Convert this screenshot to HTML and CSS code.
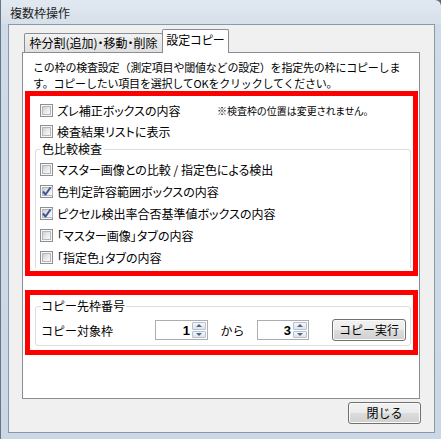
FILE: index.html
```html
<!DOCTYPE html>
<html lang="ja">
<head>
<meta charset="utf-8">
<title>複数枠操作</title>
<link rel="stylesheet" href="styles.css">
</head>
<body>
<div class="window">
  <div class="titlebar">複数枠操作</div>
  <div class="client">
    <div class="tabs">
      <div class="tab">枠分割(追加)・移動・削除</div>
      <div class="tab active">設定コピー</div>
    </div>
    <div class="panel">
      <p class="desc">この枠の検査設定（測定項目や閾値などの設定）を指定先の枠にコピーしま<br>す。コピーしたい項目を選択してOKをクリックしてください。</p>
      <div class="mark items">
        <div class="row first">
          <span class="check wide"><span class="cb"><span class="inner"></span></span>ズレ補正ボックスの内容</span>
          <span class="note">※検査枠の位置は変更されません。</span>
        </div>
        <div class="row second">
          <span class="check"><span class="cb"><span class="inner"></span></span>検査結果リストに表示</span>
        </div>
        <fieldset class="group color">
          <legend>色比較検査</legend>
          <div class="row grow"><span class="check"><span class="cb"><span class="inner"></span></span>マスター画像との比較 / 指定色による検出</span></div>
          <div class="row grow"><span class="check"><span class="cb"><span class="inner"><svg class="tick" width="11" height="11" viewBox="0 0 11 11"><polyline points="2,5.5 4.5,8.5 9.5,1.5" fill="none" stroke="#3f5597" stroke-width="2" stroke-linejoin="round"/></svg></span></span>色判定許容範囲ボックスの内容</span></div>
          <div class="row grow"><span class="check"><span class="cb"><span class="inner"><svg class="tick" width="11" height="11" viewBox="0 0 11 11"><polyline points="2,5.5 4.5,8.5 9.5,1.5" fill="none" stroke="#3f5597" stroke-width="2" stroke-linejoin="round"/></svg></span></span>ピクセル検出率合否基準値ボックスの内容</span></div>
          <div class="row grow"><span class="check"><span class="cb"><span class="inner"></span></span>「マスター画像」タブの内容</span></div>
          <div class="row grow"><span class="check"><span class="cb"><span class="inner"></span></span>「指定色」タブの内容</span></div>
        </fieldset>
      </div>
      <div class="mark dest">
        <fieldset class="group target">
          <legend>コピー先枠番号</legend>
          <div class="copyrow">
            <span class="lbl">コピー対象枠</span>
            <span class="spin s1"><span class="val">1</span><span class="arrows"><span class="ab up"></span><span class="ab down"></span></span></span>
            <span class="kara">から</span>
            <span class="spin s2"><span class="val">3</span><span class="arrows"><span class="ab up"></span><span class="ab down"></span></span></span>
            <button class="btn exec">コピー実行</button>
          </div>
        </fieldset>
      </div>
    </div>
    <div class="footer">
      <button class="btn close">閉じる</button>
    </div>
  </div>
</div>
</body>
</html>
```
FILE: styles.css
```css
* { box-sizing: border-box; }
html, body { margin: 0; padding: 0; }
body {
  width: 441px;
  height: 439px;
  overflow: hidden;
  background: #5f6873;
  font-family: "Noto Sans CJK JP", "Noto Sans", sans-serif;
  font-size: 12px;
  color: #000;
}
.window {
  width: 441px;
  height: 439px;
  display: flex;
  flex-direction: column;
  padding: 0 6px 6px 7px;
  border-left: 1px solid #6a7580;
  border-top-right-radius: 6px;
  background: linear-gradient(to bottom, #e1e8f0 0, #d6e0ea 24px, #cfdbe8 24px, #cad7e5 100%);
}
.titlebar {
  flex: none;
  height: 24px;
  padding: 5px 0 0 2px;
  line-height: 16px;
  font-size: 12px;
  color: #1e1e1e;
}
.client {
  flex: 1;
  display: flex;
  flex-direction: column;
  border: 1px solid #8c98a5;
  background: #f0f0f0;
  padding: 4px 14px 8px 13px;
}
.tabs {
  flex: none;
  height: 23px;
  display: flex;
  align-items: flex-end;
  padding-left: 2px;
}
.tab {
  width: 139px;
  height: 19px;
  border: 1px solid #898c95;
  border-bottom: none;
  border-radius: 2px 2px 0 0;
  background: linear-gradient(to bottom, #f3f3f3, #e8e8e8 50%, #e0e0e0);
  text-align: center;
  line-height: 18px;
  white-space: nowrap;
  font-feature-settings: "palt";
}
.tab.active {
  position: relative;
  z-index: 1;
  width: 67px;
  height: 24px;
  margin-left: -1px;
  margin-bottom: -1px;
  background: #fff;
  line-height: 20px;
}
.panel {
  flex: 1;
  border: 1px solid #898c95;
  background: #fff;
  padding-top: 6px;
}
.desc {
  margin: 0 0 0 10px;
  font-size: 11px;
  line-height: 16px;
  white-space: nowrap;
  letter-spacing: -0.2px;
}
.mark {
  border: 5px solid #ff0000;
  margin: 0 1px 0 2px;
}
.items {
  padding: 3px 0 3px 0;
}
.row {
  display: flex;
  align-items: center;
  height: 22px;
  white-space: nowrap;
}
.items > .row { padding-left: 10px; }
.items > .row.second { height: 21px; }
.check {
  display: flex;
  align-items: center;
  font-feature-settings: "palt";
}
.check.wide { width: 177px; }
.note {
  font-size: 10px;
  font-feature-settings: "palt";
}
.cb {
  flex: none;
  width: 13px;
  height: 13px;
  margin-right: 4px;
  border: 1px solid #8e8f8f;
  background: #f7f7f7;
  padding: 1px;
  display: flex;
}
.inner {
  flex: 1;
  display: flex;
  border: 1px solid #b4b8bd;
  background: linear-gradient(135deg, #cdd0d4, #eceded 60%, #f8f8f8);
}
.tick {
  flex: none;
  margin: -2px 0 0 -2px;
  overflow: visible;
}
.group {
  border: 1px solid #d5dfe5;
  border-radius: 3px;
  min-width: 0;
}
.group legend {
  padding: 0 2px;
  line-height: 14px;
  font-size: 12px;
}
.group.color {
  margin: 0 2px 0 5px;
  padding: 2px 0 0 4px;
  border-bottom: none;
  border-bottom-left-radius: 0;
  border-bottom-right-radius: 0;
}
.dest {
  margin-top: 14px;
}
.group.target {
  margin: 4px 2px 4px 5px;
  padding: 6px 0 4px 5px;
}
.group.target legend { padding: 0 1px 0 0; }
.copyrow {
  display: flex;
  align-items: center;
  height: 22px;
  white-space: nowrap;
}
.lbl { width: 114px; }
.kara { width: 49px; text-align: center; }
.spin {
  flex: none;
  height: 20px;
  display: flex;
  border: 1px solid #abadb3;
  background: #fff;
  padding: 1px 1px 1px 0;
}
.s1 { width: 53px; }
.s2 { width: 52px; }
.val {
  flex: 1;
  text-align: right;
  padding-right: 2px;
  font-family: "Liberation Sans", Arial, sans-serif;
  font-weight: bold;
  font-size: 13px;
  line-height: 17px;
}
.arrows {
  flex: none;
  width: 14px;
  display: flex;
  flex-direction: column;
  gap: 1px;
}
.ab {
  flex: 1;
  border: 1px solid #b9c1cc;
  border-radius: 1px;
  background: linear-gradient(to bottom, #f4f6f9, #dee4ec);
  display: flex;
  align-items: center;
  justify-content: center;
}
.ab::before {
  content: "";
  width: 0;
  height: 0;
  border-left: 3px solid transparent;
  border-right: 3px solid transparent;
}
.ab.up::before { border-bottom: 3px solid #4d6388; }
.ab.down::before { border-top: 3px solid #4d6388; }
.btn {
  height: 22px;
  border: 1px solid #707070;
  border-radius: 3px;
  background: linear-gradient(to bottom, #f2f2f2 0%, #ebebeb 50%, #dddddd 50%, #cfcfcf 100%);
  box-shadow: inset 0 0 0 1px #fbfbfb;
  font-family: "Noto Sans CJK JP", sans-serif;
  font-size: 12px;
  color: #000;
  padding: 0;
  line-height: 18px;
}
.btn.exec { width: 74px; margin-left: 23px; }
.footer {
  flex: none;
  height: 25px;
  display: flex;
  justify-content: flex-end;
  align-items: flex-end;
}
.btn.close { width: 73px; margin-right: -1px; }
```
